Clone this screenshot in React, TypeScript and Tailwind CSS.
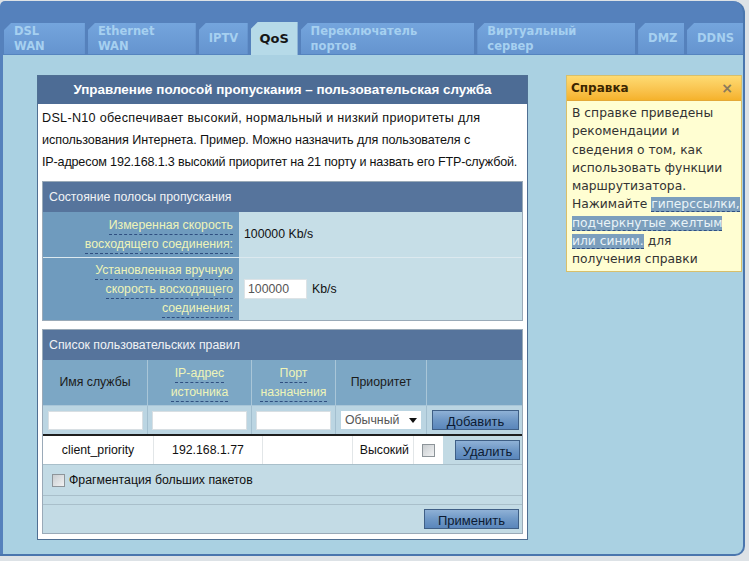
import React from 'react';

const SANS = "font-['Liberation_Sans',Arial,sans-serif]";
const VERDANA = "font-['DejaVu_Sans',Verdana,sans-serif]";

const TABS = [
  { label: ['DSL', 'WAN'], w: 'w-[81px]' },
  { label: ['Ethernet', 'WAN'], w: 'w-[108px]' },
  { label: ['IPTV'], w: 'w-[49px]' },
  { label: ['QoS'], w: 'w-[47px]', active: true },
  { label: ['Переключатель', 'портов'], w: 'w-[174px]' },
  { label: ['Виртуальный', 'сервер'], w: 'w-[158px]' },
  { label: ['DMZ'], w: 'w-[46px]' },
  { label: ['DDNS'], w: 'w-[56px]' },
];

function Tab({ label, w, active }: { label: string[]; w: string; active?: boolean }) {
  if (active) {
    return (
      <div
        className={`${w} h-[33px] bg-[#b6dae8] flex items-center justify-center text-[13px] font-bold text-[#161616] [clip-path:polygon(7px_0,100%_0,100%_100%,0_100%,0_7px)]`}
      >
        {label[0]}
      </div>
    );
  }
  return (
    <div
      className={`${w} h-[32px] bg-gradient-to-b from-[#74a5dd] to-[#6594cf] border-b border-[#5584bf] flex flex-col justify-center pl-[10px] text-[11.5px] leading-[15px] font-bold text-[#a6d0f0] [clip-path:polygon(7px_0,100%_0,100%_100%,0_100%,0_7px)]`}
    >
      {label.map((l) => (
        <span key={l}>{l}</span>
      ))}
    </div>
  );
}

function HelpLabel({ lines, center }: { lines: string[]; center?: boolean }) {
  return (
    <div className={`flex flex-col ${center ? 'items-center' : 'items-end'}`}>
      {lines.map((l) => (
        <span key={l} className="border-b border-dashed border-[#2f4f80] leading-[18px]">
          {l}
        </span>
      ))}
    </div>
  );
}

function Checkbox() {
  return (
    <span className="inline-block w-[13px] h-[13px] border border-[#8d9499] bg-gradient-to-br from-[#c9cdd0] to-[#f1f2f3]" />
  );
}

function Btn({ children, w }: { children: React.ReactNode; w: string }) {
  return (
    <button
      className={`${w} h-[20px] border border-[#3f5f86] bg-gradient-to-b from-[#8fb1d6] via-[#6f98c6] to-[#5a86bb] text-[13px] leading-none text-[#0c1b33] flex items-end justify-center pb-[1px]`}
    >
      {children}
    </button>
  );
}

export default function App() {
  return (
    <div className={`w-[749px] h-[561px] bg-[#dde2e6] overflow-hidden ${SANS}`}>
      <div className="w-[745px] h-[555px] mt-[1px] bg-[#5581bc] rounded-tl-[5px] rounded-tr-[12px] rounded-br-[10px] border-r-2 border-b-2 border-[#4a76ae] flex flex-col overflow-hidden">
        {/* tabs */}
        <div className={`h-[54px] shrink-0 pl-[4px] flex items-end gap-[3px] ${VERDANA}`}>
          {TABS.map((t) => (
            <Tab key={t.label.join()} {...t} />
          ))}
        </div>

        {/* content */}
        <div className="flex-1 min-h-0 ml-[3px] bg-[#aad1e2] flex items-start pl-[34px] pt-[20px] gap-[38px]">
          {/* main panel */}
          <div className="w-[491px] shrink-0 bg-white border border-[#4f6f93] pb-[5px]">
            <div className="h-[28px] bg-[#4d6c95] text-white text-[13.4px] font-bold flex items-center justify-center">
              Управление полосой пропускания – пользовательская служба
            </div>
            <div className="px-[4px]">
              <div className="text-[12.6px] leading-[22px] text-[#111] pt-[3px] pb-[8px] whitespace-nowrap">
                <p className="tracking-[0.3px]">DSL-N10 обеспечивает высокий, нормальный и низкий приоритеты для</p>
                <p className="tracking-[-0.08px]">использования Интернета. Пример. Можно назначить для пользователя с</p>
                <p className="tracking-[-0.18px]">
                  IP-адресом 192.168.1.3 высокий приоритет на 21 порту и назвать его FTP-службой.
                </p>
              </div>

              {/* bandwidth state */}
              <div className="border border-[#9aaab8] text-[12.3px]">
                <div className="h-[30px] bg-[#56749c] text-[#f1f3f5] pl-[6px] flex items-center">
                  Состояние полосы пропускания
                </div>
                <div className="flex h-[45px]">
                  <div className="w-[196px] bg-[#6f9bbe] text-[#eef4b8] pr-[6px] flex items-center justify-end text-right">
                    <HelpLabel lines={['Измеренная скорость', 'восходящего соединения:']} />
                  </div>
                  <div className="flex-1 bg-[#c6dee7] pl-[5px] flex items-center text-[#111]">100000 Kb/s</div>
                </div>
                <div className="flex h-[63px] border-t border-[#dce9ef]">
                  <div className="w-[196px] bg-[#6f9bbe] text-[#eef4b8] pr-[6px] flex items-center justify-end text-right">
                    <HelpLabel lines={['Установленная вручную', 'скорость восходящего', 'соединения:']} />
                  </div>
                  <div className="flex-1 bg-[#c6dee7] pl-[5px] flex items-center gap-[5px] text-[#111]">
                    <span className="w-[63px] h-[20px] bg-white border border-[#dde3e6] pl-[3px] text-[#555] flex items-center">
                      100000
                    </span>
                    Kb/s
                  </div>
                </div>
              </div>

              {/* rules list */}
              <div className="mt-[8px] border border-[#9aaab8] text-[12.3px]">
                <div className="h-[30px] bg-[#56749c] text-[#f1f3f5] pl-[6px] flex items-center">
                  Список пользовательских правил
                </div>
                <div className="flex h-[45px] bg-[#7ca7c5] text-center">
                  <div className="w-[105px] flex items-center justify-center text-[#1b1b1b] border-r border-[#a9c6d8]">
                    Имя службы
                  </div>
                  <div className="w-[104px] flex items-center justify-center text-[#eef4b8] border-r border-[#a9c6d8]">
                    <HelpLabel center lines={['IP-адрес', 'источника']} />
                  </div>
                  <div className="w-[84px] flex items-center justify-center text-[#eef4b8] border-r border-[#a9c6d8]">
                    <HelpLabel center lines={['Порт', 'назначения']} />
                  </div>
                  <div className="w-[91px] flex items-center justify-center text-[#1b1b1b] border-r border-[#a9c6d8]">
                    Приоритет
                  </div>
                  <div className="flex-1" />
                </div>
                <div className="flex h-[29px] bg-[#bbd5e2] items-center border-t border-[#a9c6d8]">
                  <div className="w-[105px] h-full flex items-center justify-center border-r border-[#a3bfcf]">
                    <span className="w-[95px] h-[19px] bg-white border border-[#d8dfe3]" />
                  </div>
                  <div className="w-[104px] h-full flex items-center justify-center border-r border-[#a3bfcf]">
                    <span className="w-[95px] h-[19px] bg-white border border-[#d8dfe3]" />
                  </div>
                  <div className="w-[84px] h-full flex items-center justify-center border-r border-[#a3bfcf]">
                    <span className="w-[75px] h-[19px] bg-white border border-[#d8dfe3]" />
                  </div>
                  <div className="w-[91px] h-full flex items-center justify-center border-r border-[#a3bfcf]">
                    <span className="w-[80px] h-[18px] bg-white flex items-center justify-between pl-[4px] pr-[4px] text-[#555]">
                      Обычный
                      <svg width="8" height="5" viewBox="0 0 8 5">
                        <path d="M0 0h8L4 5z" fill="#111" />
                      </svg>
                    </span>
                  </div>
                  <div className="flex-1 flex items-center justify-end pr-[3px]">
                    <Btn w="w-[87px]">Добавить</Btn>
                  </div>
                </div>
                <div className="flex h-[30px] bg-white border-t-2 border-[#1e1e1e] text-[#111]">
                  <div className="w-[111px] flex items-center justify-center border-r border-[#e2e6e8]">client_priority</div>
                  <div className="w-[109px] flex items-center justify-center border-r border-[#e2e6e8]">192.168.1.77</div>
                  <div className="w-[90px] border-r border-[#e2e6e8]" />
                  <div className="w-[61px] flex items-center justify-end pr-[4px] border-r border-[#e2e6e8]">Высокий</div>
                  <div className="w-[29px] flex items-center justify-center">
                    <Checkbox />
                  </div>
                  <div className="flex-1 bg-[#c2dae4] flex items-center pl-[12px]">
                    <Btn w="w-[65px]">Удалить</Btn>
                  </div>
                </div>
                <div className="h-[31px] bg-[#c3dbe5] border-t border-[#a9bfca] flex items-center gap-[4px] pl-[9px] text-[#111]">
                  <Checkbox />
                  Фрагментация больших пакетов
                </div>
                <div className="h-[9px] bg-[#c3dbe5] border-t border-[#a9bfca]" />
                <div className="h-[29px] bg-[#c3dbe5] border-t border-[#a9bfca] flex items-center justify-end pr-[3px]">
                  <Btn w="w-[95px]">Применить</Btn>
                </div>
              </div>
            </div>
          </div>

          {/* help box */}
          <div className={`w-[176px] h-[197px] shrink-0 bg-[#fffed2] border border-[#d7bf6c] ${VERDANA}`}>
            <div className="h-[25px] bg-gradient-to-b from-[#fedb72] to-[#f5b22a] border-b border-[#e3a838] px-[4px] flex items-center justify-between">
              <span className="text-[12px] font-bold text-[#3b2600]">Справка</span>
              <span className="text-[14px] font-bold text-[#8a7a5c] pr-[4px]">×</span>
            </div>
            <div className="px-[5px] pt-[3px] text-[12.3px] leading-[18.3px] text-[#333] whitespace-nowrap">
              В справке приведены
              <br />
              рекомендации и
              <br />
              сведения о том, как
              <br />
              использовать функции
              <br />
              маршрутизатора.
              <br />
              Нажимайте{' '}
              <span className="bg-[#7c9fbd] text-[#e9f3f7] border-b border-dashed border-[#2f4f80]">гиперссылки,</span>
              <br />
              <span className="bg-[#7c9fbd] text-[#e9f3f7] border-b border-dashed border-[#2f4f80]">подчеркнутые желтым</span>
              <br />
              <span className="bg-[#7c9fbd] text-[#e9f3f7] border-b border-dashed border-[#2f4f80]">или синим.</span> для
              <br />
              получения справки
            </div>
          </div>
        </div>
      </div>
    </div>
  );
}
